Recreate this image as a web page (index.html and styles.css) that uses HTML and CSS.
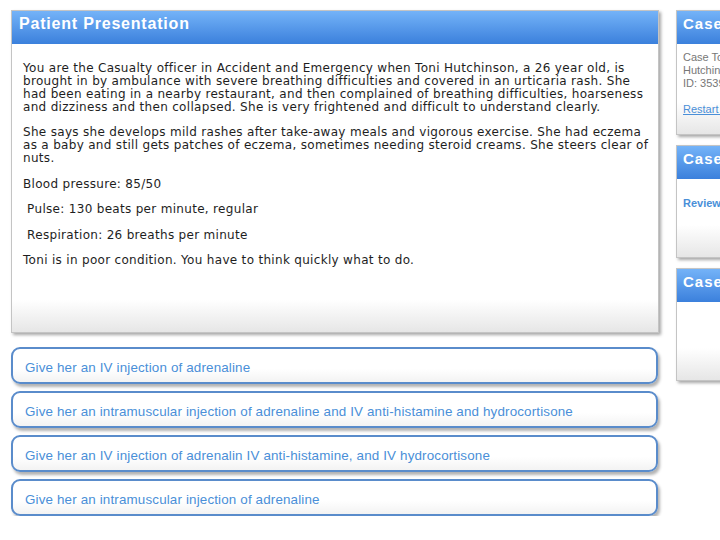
FILE: index.html
```html
<!DOCTYPE html>
<html>
<head>
<meta charset="utf-8">
<title>Patient Presentation</title>
<link rel="stylesheet" href="styles.css">
</head>
<body>
<div class="page">
  <div class="main">
    <section class="panel main-panel">
      <h1 class="panel-head">Patient Presentation</h1>
      <div class="panel-body story">
        <p>You are the Casualty officer in Accident and Emergency when Toni Hutchinson, a 26 year old, is brought in by ambulance with severe breathing difficulties and covered in an urticaria rash. She had been eating in a nearby restaurant, and then complained of breathing difficulties, hoarseness and dizziness and then collapsed. She is very frightened and difficult to understand clearly.</p>
        <p>She says she develops mild rashes after take-away meals and vigorous exercise. She had eczema as a baby and still gets patches of eczema, sometimes needing steroid creams. She steers clear of nuts.</p>
        <p>Blood pressure: 85/50</p>
        <p>&nbsp;Pulse: 130 beats per minute, regular</p>
        <p>&nbsp;Respiration: 26 breaths per minute</p>
        <p>Toni is in poor condition. You have to think quickly what to do.</p>
      </div>
    </section>
    <div class="options">
      <a class="option" href="#">Give her an IV injection of adrenaline</a>
      <a class="option" href="#">Give her an intramuscular injection of adrenaline and IV anti-histamine and hydrocortisone</a>
      <a class="option" href="#">Give her an IV injection of adrenalin IV anti-histamine, and IV hydrocortisone</a>
      <a class="option" href="#">Give her an intramuscular injection of adrenaline</a>
    </div>
  </div>
  <aside class="side">
    <section class="panel side-panel side-1">
      <h2 class="panel-head side-head">Case Details</h2>
      <div class="side-body">
        <p class="case-info">Case Toni<br>Hutchinson<br>ID: 3539</p>
        <a class="restart" href="#">Restart case</a>
      </div>
    </section>
    <section class="panel side-panel side-2">
      <h2 class="panel-head side-head">Case Review</h2>
      <div class="side-body">
        <a class="review" href="#">Review decisions</a>
      </div>
    </section>
    <section class="panel side-panel side-3">
      <h2 class="panel-head side-head">Case Notes</h2>
      <div class="side-body"></div>
    </section>
  </aside>
</div>
</body>
</html>
```
FILE: styles.css
```css
html, body {
  margin: 0;
  padding: 0;
  background: #fff;
  overflow: hidden;
}
.page {
  display: flex;
  gap: 17px;
  padding: 10px 0 0 11px;
  width: 1000px;
}
.main {
  width: 648px;
  flex-shrink: 0;
}
.panel {
  border: 1px solid #c4c4c4;
  box-shadow: 2px 2px 3px rgba(0, 0, 0, 0.35);
  background: linear-gradient(to bottom, #fff calc(100% - 32px), #e6e6e6);
}
.panel-head {
  margin: 0;
  height: 33px;
  box-sizing: border-box;
  padding: 3px 0 0 7px;
  background: linear-gradient(to bottom, #74b3f8, #3b80dc);
  color: #fff;
  font: bold 16px/20px "Liberation Sans", Arial, sans-serif;
  letter-spacing: 0.8px;
}
.main-panel {
  height: 323px;
  box-sizing: border-box;
}
.story {
  padding: 18px 8px 0 11px;
  font: 12px/13px "DejaVu Sans", Verdana, sans-serif;
  letter-spacing: 0.31px;
  color: #1e1e1e;
}
.story p {
  margin: 0 0 12.4px;
}
.options {
  display: flex;
  flex-direction: column;
  gap: 7px;
  margin-top: 14px;
}
.option {
  display: flex;
  align-items: center;
  height: 37px;
  box-sizing: border-box;
  padding: 5px 0 0 12px;
  width: 647px;
  border: 2px solid #5a8ccb;
  border-radius: 9px;
  background: linear-gradient(to bottom, #fff 60%, #f3f3f3);
  box-shadow: 2px 3px 3px rgba(0, 0, 0, 0.3);
  color: #4a8fd8;
  text-decoration: none;
  font: 13.4px/16px "Liberation Sans", Arial, sans-serif;
  letter-spacing: 0.15px;
}
.side {
  width: 200px;
  flex-shrink: 0;
  display: flex;
  flex-direction: column;
  gap: 10px;
}
.side-panel {
  box-sizing: border-box;
}
.side-1 { height: 125px; }
.side-2 { height: 113px; }
.side-3 { height: 113px; }
.side-head {
  padding-left: 6px;
  font-size: 15px;
  letter-spacing: 1px;
  padding-top: 3px;
}
.side-body {
  padding: 7px 0 0 6px;
  font: 11px/13px "Liberation Sans", Arial, sans-serif;
  color: #777;
}
.case-info {
  margin: 0 0 13px;
}
.restart {
  color: #4a8fd8;
}
.review {
  display: block;
  margin-top: 11px;
  color: #4a8fd8;
  font-weight: bold;
  text-decoration: none;
}
```
